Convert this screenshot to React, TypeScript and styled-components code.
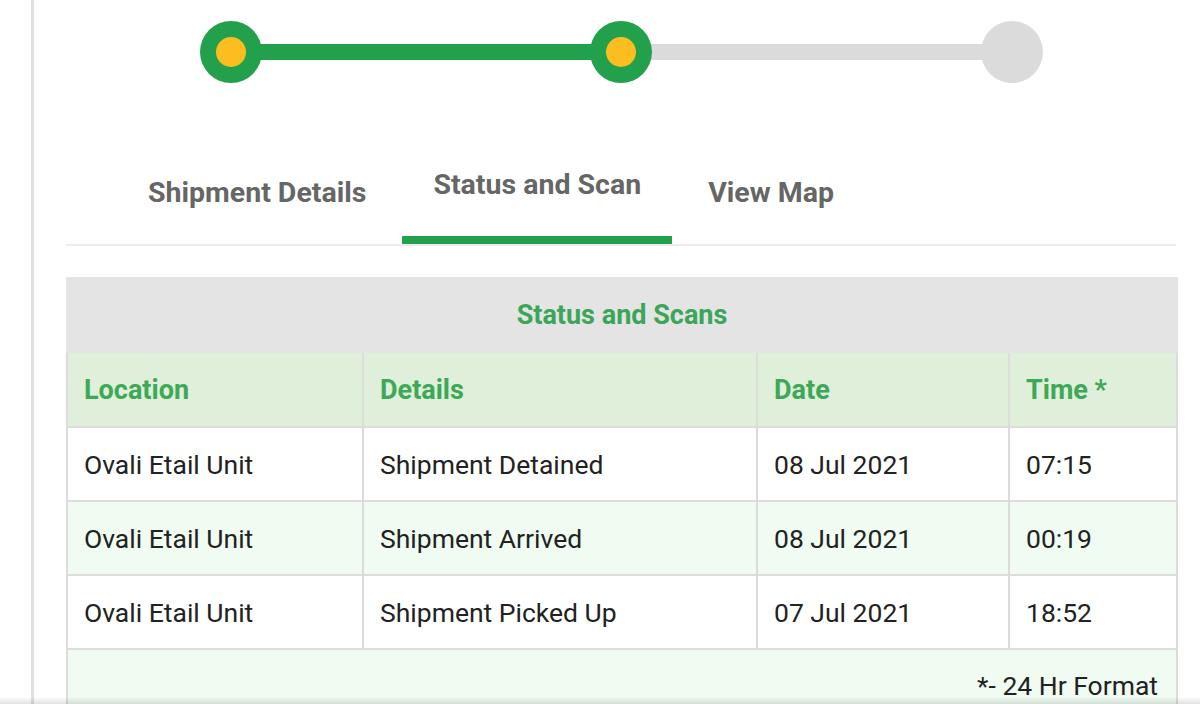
import styled, { createGlobalStyle } from 'styled-components';

const GlobalStyle = createGlobalStyle`
  html, body {
    margin: 0;
    padding: 0;
    background: #ffffff;
    font-family: Roboto, "Noto Sans", Arial, sans-serif;
    overflow: hidden;
  }
`;

const Page = styled.div`
  display: flex;
  height: 704px;
`;

const Rail = styled.div`
  width: 31px;
  flex-shrink: 0;
  border-right: 3px solid #e0e0e0;
`;

const Main = styled.div`
  padding-left: 32px;
  width: 1110px;
`;

const Stepper = styled.div`
  display: flex;
  align-items: center;
  width: 843px;
  margin: 0 auto;
  padding-top: 21px;
`;

const Node = styled.div<{ $done?: boolean }>`
  width: 62px;
  height: 62px;
  border-radius: 50%;
  flex-shrink: 0;
  display: flex;
  align-items: center;
  justify-content: center;
  background: ${p => (p.$done ? '#22a04b' : '#dcdbdc')};
  position: relative;
  z-index: 1;

  &::after {
    content: '';
    display: ${p => (p.$done ? 'block' : 'none')};
    width: 30px;
    height: 30px;
    border-radius: 50%;
    background: #fbbd1f;
  }
`;

const Bar = styled.div<{ $done?: boolean }>`
  flex: 1;
  height: 16px;
  margin: 0 -4px;
  background: ${p => (p.$done ? '#22a04b' : '#dcdbdc')};
`;

const TabBar = styled.div`
  display: flex;
  padding-left: 46px;
  border-bottom: 2px solid #ececec;
`;

const Tab = styled.div<{ $active?: boolean }>`
  padding: ${p => (p.$active ? '87px 31px 36px' : '95px 36px 28px')};
  border-bottom: 8px solid ${p => (p.$active ? '#22a04b' : 'transparent')};
  font-size: 28.5px;
  line-height: 30px;
  font-weight: 700;
  color: #666666;
  white-space: nowrap;
`;

const Table = styled.table`
  margin-top: 31px;
  width: 1110px;
  border-collapse: collapse;
  table-layout: fixed;
  border: 2px solid #dcdcdc;
  font-size: 26.5px;
`;

const Col = styled.col<{ $w: number }>`
  width: ${p => p.$w}px;
`;

const TitleCell = styled.th`
  height: 72px;
  padding: 0;
  background: #e4e4e5;
  color: #3ba558;
  font-size: 27px;
  font-weight: 700;
  text-align: center;
  border: 2px solid #e4e4e5;
`;

const HeadCell = styled.th`
  height: 73px;
  padding: 0 16px;
  background: #dfefd9;
  color: #3da857;
  font-size: 27px;
  font-weight: 700;
  text-align: left;
  border: 2px solid #dcdcdc;
`;

const Row = styled.tr<{ $tint?: boolean }>`
  background: ${p => (p.$tint ? '#f0fcf2' : '#ffffff')};
`;

const Cell = styled.td`
  height: 72px;
  padding: 0 16px;
  color: #222222;
  border: 2px solid #dcdcdc;
  white-space: nowrap;
`;

const FootCell = styled.td`
  height: 70px;
  padding: 20px 18px 0 18px;
  vertical-align: top;
  text-align: right;
  color: #222222;
  background: #f0fcf2;
  border: 2px solid #dcdcdc;
`;

const BottomShade = styled.div`
  position: fixed;
  left: 0;
  right: 0;
  bottom: 0;
  height: 7px;
  background: linear-gradient(to bottom, rgba(0, 0, 0, 0), rgba(0, 0, 0, 0.12));
  pointer-events: none;
`;

const scans = [
  { location: 'Ovali Etail Unit', details: 'Shipment Detained', date: '08 Jul 2021', time: '07:15' },
  { location: 'Ovali Etail Unit', details: 'Shipment Arrived', date: '08 Jul 2021', time: '00:19' },
  { location: 'Ovali Etail Unit', details: 'Shipment Picked Up', date: '07 Jul 2021', time: '18:52' },
];

const App = () => {
  return (
    <>
      <GlobalStyle />
      <Page>
        <Rail />
        <Main>
          <Stepper>
            <Node $done />
            <Bar $done />
            <Node $done />
            <Bar />
            <Node />
          </Stepper>

          <TabBar>
            <Tab>Shipment Details</Tab>
            <Tab $active>Status and Scan</Tab>
            <Tab>View Map</Tab>
          </TabBar>

          <Table>
            <colgroup>
              <Col $w={296} />
              <Col $w={394} />
              <Col $w={252} />
              <Col $w={168} />
            </colgroup>
            <thead>
              <tr>
                <TitleCell colSpan={4}>Status and Scans</TitleCell>
              </tr>
              <tr>
                <HeadCell>Location</HeadCell>
                <HeadCell>Details</HeadCell>
                <HeadCell>Date</HeadCell>
                <HeadCell>Time *</HeadCell>
              </tr>
            </thead>
            <tbody>
              {scans.map((s, i) => (
                <Row key={i} $tint={i % 2 === 1}>
                  <Cell>{s.location}</Cell>
                  <Cell>{s.details}</Cell>
                  <Cell>{s.date}</Cell>
                  <Cell>{s.time}</Cell>
                </Row>
              ))}
              <tr>
                <FootCell colSpan={4}>*- 24 Hr Format</FootCell>
              </tr>
            </tbody>
          </Table>
        </Main>
      </Page>
      <BottomShade />
    </>
  );
};

export default App;
